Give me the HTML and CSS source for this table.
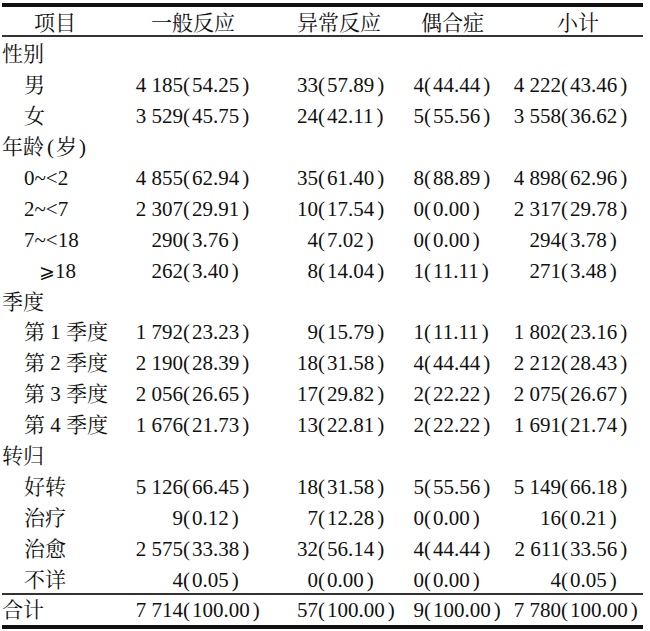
FILE: index.html
```html
<!DOCTYPE html>
<html lang="zh-CN">
<head>
<meta charset="utf-8">
<title>不良反应分类统计</title>
<link rel="stylesheet" href="styles.css">
</head>
<body>
<table class="stats">
  <colgroup>
    <col class="col1"><col class="col2"><col class="col3"><col class="col4"><col class="col5">
  </colgroup>
  <thead>
    <tr>
      <th class="h1">项目</th>
      <th class="h2">一般反应</th>
      <th class="h3">异常反应</th>
      <th class="h4">偶合症</th>
      <th class="h5">小计</th>
    </tr>
  </thead>
  <tbody>
    <tr><td class="label">性别</td><td></td><td></td><td></td><td></td></tr>
    <tr><td class="label sub">男</td><td class="v2"><span class="n">4 185</span><span class="p">(<span class="pv">54.25</span>)</span></td><td class="v3"><span class="n">33</span><span class="p">(<span class="pv">57.89</span>)</span></td><td class="v4"><span class="n">4</span><span class="p">(<span class="pv">44.44</span>)</span></td><td class="v5"><span class="n">4 222</span><span class="p">(<span class="pv">43.46</span>)</span></td></tr>
    <tr><td class="label sub">女</td><td class="v2"><span class="n">3 529</span><span class="p">(<span class="pv">45.75</span>)</span></td><td class="v3"><span class="n">24</span><span class="p">(<span class="pv">42.11</span>)</span></td><td class="v4"><span class="n">5</span><span class="p">(<span class="pv">55.56</span>)</span></td><td class="v5"><span class="n">3 558</span><span class="p">(<span class="pv">36.62</span>)</span></td></tr>
    <tr><td class="label">年龄<span class="unit">(<span class="uv">岁</span>)</span></td><td></td><td></td><td></td><td></td></tr>
    <tr><td class="label sub">0~&lt;2</td><td class="v2"><span class="n">4 855</span><span class="p">(<span class="pv">62.94</span>)</span></td><td class="v3"><span class="n">35</span><span class="p">(<span class="pv">61.40</span>)</span></td><td class="v4"><span class="n">8</span><span class="p">(<span class="pv">88.89</span>)</span></td><td class="v5"><span class="n">4 898</span><span class="p">(<span class="pv">62.96</span>)</span></td></tr>
    <tr><td class="label sub">2~&lt;7</td><td class="v2"><span class="n">2 307</span><span class="p">(<span class="pv">29.91</span>)</span></td><td class="v3"><span class="n">10</span><span class="p">(<span class="pv">17.54</span>)</span></td><td class="v4"><span class="n">0</span><span class="p">(<span class="pv">0.00</span>)</span></td><td class="v5"><span class="n">2 317</span><span class="p">(<span class="pv">29.78</span>)</span></td></tr>
    <tr><td class="label sub">7~&lt;18</td><td class="v2"><span class="n">290</span><span class="p">(<span class="pv">3.76</span>)</span></td><td class="v3"><span class="n">4</span><span class="p">(<span class="pv">7.02</span>)</span></td><td class="v4"><span class="n">0</span><span class="p">(<span class="pv">0.00</span>)</span></td><td class="v5"><span class="n">294</span><span class="p">(<span class="pv">3.78</span>)</span></td></tr>
    <tr><td class="label sub deep"><span class="ge">⩾</span>18</td><td class="v2"><span class="n">262</span><span class="p">(<span class="pv">3.40</span>)</span></td><td class="v3"><span class="n">8</span><span class="p">(<span class="pv">14.04</span>)</span></td><td class="v4"><span class="n">1</span><span class="p">(<span class="pv">11.11</span>)</span></td><td class="v5"><span class="n">271</span><span class="p">(<span class="pv">3.48</span>)</span></td></tr>
    <tr><td class="label">季度</td><td></td><td></td><td></td><td></td></tr>
    <tr><td class="label sub">第 1 季度</td><td class="v2"><span class="n">1 792</span><span class="p">(<span class="pv">23.23</span>)</span></td><td class="v3"><span class="n">9</span><span class="p">(<span class="pv">15.79</span>)</span></td><td class="v4"><span class="n">1</span><span class="p">(<span class="pv">11.11</span>)</span></td><td class="v5"><span class="n">1 802</span><span class="p">(<span class="pv">23.16</span>)</span></td></tr>
    <tr><td class="label sub">第 2 季度</td><td class="v2"><span class="n">2 190</span><span class="p">(<span class="pv">28.39</span>)</span></td><td class="v3"><span class="n">18</span><span class="p">(<span class="pv">31.58</span>)</span></td><td class="v4"><span class="n">4</span><span class="p">(<span class="pv">44.44</span>)</span></td><td class="v5"><span class="n">2 212</span><span class="p">(<span class="pv">28.43</span>)</span></td></tr>
    <tr><td class="label sub">第 3 季度</td><td class="v2"><span class="n">2 056</span><span class="p">(<span class="pv">26.65</span>)</span></td><td class="v3"><span class="n">17</span><span class="p">(<span class="pv">29.82</span>)</span></td><td class="v4"><span class="n">2</span><span class="p">(<span class="pv">22.22</span>)</span></td><td class="v5"><span class="n">2 075</span><span class="p">(<span class="pv">26.67</span>)</span></td></tr>
    <tr><td class="label sub">第 4 季度</td><td class="v2"><span class="n">1 676</span><span class="p">(<span class="pv">21.73</span>)</span></td><td class="v3"><span class="n">13</span><span class="p">(<span class="pv">22.81</span>)</span></td><td class="v4"><span class="n">2</span><span class="p">(<span class="pv">22.22</span>)</span></td><td class="v5"><span class="n">1 691</span><span class="p">(<span class="pv">21.74</span>)</span></td></tr>
    <tr><td class="label">转归</td><td></td><td></td><td></td><td></td></tr>
    <tr><td class="label sub">好转</td><td class="v2"><span class="n">5 126</span><span class="p">(<span class="pv">66.45</span>)</span></td><td class="v3"><span class="n">18</span><span class="p">(<span class="pv">31.58</span>)</span></td><td class="v4"><span class="n">5</span><span class="p">(<span class="pv">55.56</span>)</span></td><td class="v5"><span class="n">5 149</span><span class="p">(<span class="pv">66.18</span>)</span></td></tr>
    <tr><td class="label sub">治疗</td><td class="v2"><span class="n">9</span><span class="p">(<span class="pv">0.12</span>)</span></td><td class="v3"><span class="n">7</span><span class="p">(<span class="pv">12.28</span>)</span></td><td class="v4"><span class="n">0</span><span class="p">(<span class="pv">0.00</span>)</span></td><td class="v5"><span class="n">16</span><span class="p">(<span class="pv">0.21</span>)</span></td></tr>
    <tr><td class="label sub">治愈</td><td class="v2"><span class="n">2 575</span><span class="p">(<span class="pv">33.38</span>)</span></td><td class="v3"><span class="n">32</span><span class="p">(<span class="pv">56.14</span>)</span></td><td class="v4"><span class="n">4</span><span class="p">(<span class="pv">44.44</span>)</span></td><td class="v5"><span class="n">2 611</span><span class="p">(<span class="pv">33.56</span>)</span></td></tr>
    <tr><td class="label sub">不详</td><td class="v2"><span class="n">4</span><span class="p">(<span class="pv">0.05</span>)</span></td><td class="v3"><span class="n">0</span><span class="p">(<span class="pv">0.00</span>)</span></td><td class="v4"><span class="n">0</span><span class="p">(<span class="pv">0.00</span>)</span></td><td class="v5"><span class="n">4</span><span class="p">(<span class="pv">0.05</span>)</span></td></tr>
  </tbody>
  <tfoot>
    <tr><td class="label">合计</td><td class="v2"><span class="n">7 714</span><span class="p">(<span class="pv">100.00</span>)</span></td><td class="v3"><span class="n">57</span><span class="p">(<span class="pv">100.00</span>)</span></td><td class="v4"><span class="n">9</span><span class="p">(<span class="pv">100.00</span>)</span></td><td class="v5"><span class="n">7 780</span><span class="p">(<span class="pv">100.00</span>)</span></td></tr>
  </tfoot>
</table>
</body>
</html>
```

FILE: styles.css
```css
html, body {
  margin: 0;
  padding: 0;
  background: #ffffff;
}

body {
  color: #111111;
  font-family: "Liberation Serif", "Noto Serif CJK SC", "Noto Sans CJK SC", serif;
  font-size: 21px;
}

.stats {
  margin: 3px 0 0 2px;
  width: 641px;
  table-layout: fixed;
  border-collapse: separate;
  border-spacing: 0;
  border-top: 4px solid #111111;
  border-bottom: 4px solid #111111;
}

.col1 { width: 128px; }
.col2 { width: 150px; }
.col3 { width: 120px; }
.col4 { width: 105px; }
.col5 { width: 138px; }

.stats th,
.stats td {
  padding: 0;
  text-align: left;
  font-weight: normal;
  white-space: nowrap;
  line-height: 24px;
  vertical-align: middle;
}

.stats thead tr { height: 28px; }
.stats thead th {
  border-bottom: 2px solid #333333;
  padding-top: 4px;
}

.h1 { padding-left: 32px !important; }
.h2 { padding-left: 21px !important; }
.h3 { padding-left: 17px !important; }
.h4 { padding-left: 21px !important; }
.h5 { padding-left: 52px !important; }

.stats tbody tr { height: 30.9px; }
.stats tbody td { padding-top: 4px; }
.stats tfoot tr { height: 32px; }
.stats tfoot td {
  border-top: 2px solid #333333;
}

.stats .label { padding-left: 0; }
.stats .label.sub { padding-left: 22px; }
.stats .label.deep { padding-left: 37px; }

.unit { margin-left: 3px; }
.uv { margin: 0 2px 0 2px; }

.ge { font-family: "DejaVu Serif", "Liberation Serif", serif; font-size: 19px; }

.n {
  display: inline-block;
  text-align: right;
}
.v2 .n { width: 53px; }
.v3 .n { width: 38px; }
.v4 .n { width: 24px; }
.v5 .n { width: 56px; }

.pv { margin: 0 3px 0 2px; }
```
